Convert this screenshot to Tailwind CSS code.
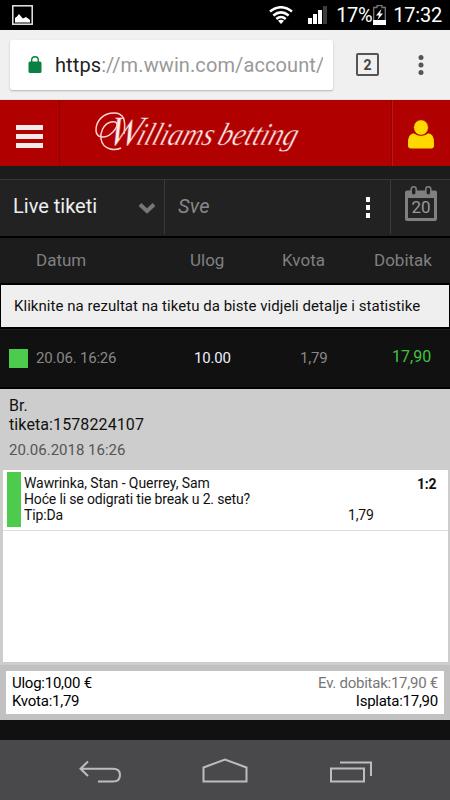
<!doctype html>
<html lang="hr">
<head>
	<meta charset="utf-8" />
	<meta name="viewport" content="width=device-width, initial-scale=1.0" />
	<title>Williams betting - Live tiketi</title>
	<script src="https://cdn.jsdelivr.net/npm/@tailwindcss/browser@4"></script>
</head>

<body class="w-[450px] h-[800px] overflow-hidden bg-[#111] font-['Roboto',sans-serif] whitespace-nowrap flex flex-col">

	<!-- Status bar -->
	<div class="h-[30px] shrink-0 bg-black text-white flex items-center justify-between pl-3 pr-[8px]">
		<svg class="w-[21px] h-[20px]" viewBox="0 0 21 20">
			<rect x=".8" y=".8" width="19.4" height="18.4" fill="none" stroke="#e8e8e8" stroke-width="1.5" />
			<path d="M3 17.500v-4.500q1-1 2-1.500l2-2.500 2.500 3 1.500 1.500 3-1.500 2 1.500 2 1.500v2.500z" fill="#fff" />
		</svg>
		<div class="flex items-center">
			<svg class="w-6 h-[18px] mr-[15px]" viewBox="0 0 24 18">
				<g fill="none" stroke="#fff" stroke-width="2.500">
					<path d="M1 5.500Q12-3 23 5.500" />
					<path d="M4.300 9.500Q12 3.300 19.700 9.500" />
					<path d="M7.300 13Q12 9 16.700 13" />
				</g>
				<path d="M9 14.800Q12 12.600 15 14.800L12 18z" fill="#fff" />
			</svg>
			<svg class="w-[19px] h-[18px] mr-[9px]" viewBox="0 0 19 18" fill="#fff">
				<rect x="0" y="12" width="4" height="6" />
				<rect x="5" y="8" width="4" height="10" />
				<rect x="10" y="4" width="4" height="14" />
				<rect x="15" y="0" width="4" height="18" fill="#3c3c3c" />
			</svg>
			<span class="text-xl leading-[30px] tracking-[-0.4px]">17%</span>
			<svg class="w-[13px] h-[20px] ml-[1px] mr-[7px]" viewBox="0 0 13 20">
				<path d="M4 2.500V.7h5v1.800h3.300v16.800H.7V2.500z" fill="none" stroke="#777" stroke-width="1.300" />
				<path d="M0 15h13v5H0z" fill="#fff" />
				<path d="M8.500 4L3 10.500h3l-1.500 4.500L10 8.500H7z" fill="#fff" />
			</svg>
			<span class="text-xl leading-[30px] tracking-[-0.2px]">17:32</span>
		</div>
	</div>

	<!-- Browser bar -->
	<div class="h-[70px] shrink-0 bg-[#f0f0f0] border-b border-[#e2e2e2] flex items-center pl-[10px]">
		<div class="w-[323px] h-[50px] bg-white rounded-[2px] shadow-[0_1px_2px_rgba(0,0,0,.25)] flex items-center pl-[18px] overflow-hidden">
			<svg class="w-[14px] h-[17px] mr-[13px]" viewBox="0 0 14 17">
				<rect x=".5" y="5.500" width="13" height="11.500" rx="1.500" fill="#0b8043" />
				<path d="M3.700 6V4a3.300 3.300 0 0 1 6.600 0v2" fill="none" stroke="#0b8043" stroke-width="1.400" />
			</svg>
			<div class="w-[268px] overflow-hidden text-xl text-[#999] tracking-[0.1px]"><span class="text-[#222]">https</span>://m.wwin.com/account/</div>
		</div>
		<div class="ml-[23px] w-[23px] h-[23px] border-2 border-[#555] rounded-[2px] text-[#444] text-sm font-bold leading-[20px] text-center">2</div>
		<svg class="w-[6px] h-[20px] ml-[39px]" viewBox="0 0 6 20" fill="#555">
			<circle cx="3" cy="2.500" r="2.500" />
			<circle cx="3" cy="10" r="2.500" />
			<circle cx="3" cy="17.500" r="2.500" />
		</svg>
	</div>

	<!-- Site header -->
	<div class="h-[66px] shrink-0 bg-[#b00000] flex">
		<div class="w-[60px] border-r border-[#8c0000] flex flex-col gap-1 pt-[25px] pl-4">
			<span class="w-[27px] h-[5px] bg-[#f2eaea]"></span>
			<span class="w-[27px] h-[5px] bg-[#f2eaea]"></span>
			<span class="w-[27px] h-[5px] bg-[#f2eaea]"></span>
		</div>
		<div class="w-[331px] pl-[33px]">
			<svg class="w-[225px] h-[66px]" viewBox="0 0 225 66">
				<g font-family="Liberation Serif, serif" font-style="italic" fill="#ffe8e8" stroke="#b00000" stroke-width=".4">
					<text font-size="42" textLength="33" lengthAdjust="spacingAndGlyphs" transform="translate(13 45) skewX(-14)">W</text>
					<text font-size="32" textLength="76" lengthAdjust="spacingAndGlyphs" transform="translate(42 45) skewX(-18)">illiams</text>
					<text font-size="32" textLength="79" lengthAdjust="spacingAndGlyphs" transform="translate(123 45) skewX(-18)">betting</text>
				</g>
				<path d="M31 34C33 20 31 13 21 13C10 13 3 21 3 30C3 38 12 40 20 32C27 24 24 21 18 22C10 24 7 33 8 39C10 50 22 51 28 48" fill="none" stroke="#f9d4d4" stroke-width="1.500" />
			</svg>
		</div>
		<div class="w-[59px] border-l border-[#8c0000] shadow-[inset_1px_0_#c41414] flex pl-[15px] pt-[20px]">
			<svg class="w-[28px] h-[29px]" viewBox="0 0 28 29">
				<path d="M6.500 13.200Q14 18.500 21.500 13.200Q27 14.500 27 22v3.500q0 3-3 3H4q-3 0-3-3V22Q1 14.500 6.500 13.200z" fill="#ffd800" />
				<ellipse cx="14" cy="7.500" rx="7.400" ry="7.700" fill="#ffd800" stroke="#b00000" stroke-width=".7" />
			</svg>
		</div>
	</div>

	<!-- Filters -->
	<div class="h-[13px] shrink-0 bg-[#1c1c1c]"></div>
	<div class="h-[59px] shrink-0 bg-[#222] border-t border-[#363636] border-b-2 border-b-black flex">
		<div class="w-[165px] h-[54px] border-r border-[#3a3a3a] flex items-center pl-[13px] pr-[8px] justify-between text-xl text-[#eee]">
			<span class="-mt-[2px]">Live tiketi</span>
			<svg class="w-[18px] h-[12px] mt-[2px]" viewBox="0 0 18 12"><path d="M2 2.500l7 6.500 7-6.500" fill="none" stroke="#777" stroke-width="4" /></svg>
		</div>
		<div class="w-[226px] h-[54px] border-r border-[#3a3a3a] flex items-center justify-between pl-[13px] pr-[20px] text-xl italic text-[#888]">
			<span class="-mt-[2px] tracking-[0.2px]">Sve</span>
			<span class="flex flex-col gap-[3px] mt-[1px]">
				<i class="w-1 h-[5px] bg-white"></i>
				<i class="w-1 h-[5px] bg-white"></i>
				<i class="w-1 h-[5px] bg-white"></i>
			</span>
		</div>
		<div class="pl-[14px] pt-[6px]">
			<svg class="w-8 h-[35px]" viewBox="0 0 32 35">
				<path d="M2 4.500h28q2 0 2 2V33q0 2-2 2H2q-2 0-2-2V6.500q0-2 2-2z" fill="#808080" />
				<rect x="3" y="12" width="26" height="20" fill="#242424" />
				<rect x="6.200" y=".8" width="5" height="8.500" rx="2.500" fill="#222" stroke="#808080" stroke-width="1.500" />
				<rect x="20.800" y=".8" width="5" height="8.500" rx="2.500" fill="#222" stroke="#808080" stroke-width="1.500" />
				<text x="16" y="26.500" text-anchor="middle" font-family="Roboto" font-size="17" fill="#999">20</text>
			</svg>
		</div>
	</div>

	<!-- Table head -->
	<div class="h-[45px] shrink-0 bg-[#1c1c1c] grid grid-cols-[190px_92px_92px_1fr] items-center text-[17px] text-[#808080]">
		<span class="pl-[36px]">Datum</span>
		<span>Ulog</span>
		<span>Kvota</span>
		<span>Dobitak</span>
	</div>

	<div class="h-[46px] shrink-0 bg-[#efefef] border-y-2 border-x border-black pl-[13px] text-[15px] leading-[42px] tracking-[0.04px] text-[#111]">Kliknite na rezultat na tiketu da biste vidjeli detalje i statistike</div>

	<!-- Ticket row -->
	<div class="h-[60px] shrink-0 bg-[#111] border-b-2 border-black border-t border-t-[#1e1e1e] grid grid-cols-[194px_106px_92px_1fr] items-center text-[15px] text-[#888]">
		<span class="flex items-center gap-[8px] pl-[9px] tracking-[-0.2px]"><i class="w-[19px] h-[19px] bg-[#4ccb4c]"></i>20.06. 16:26</span>
		<span class="tracking-[-0.2px] text-[#eef]">10.00</span>
		<span class="tracking-[-0.2px]">1,79</span>
		<span class="text-base text-[#3fc43f] -mt-[3px]">17,90</span>
	</div>

	<!-- Ticket details -->
	<div class="h-[276px] shrink-0 bg-[#cdcdcd] pl-[3px] pr-[2px]">
		<div class="h-[81px] pl-[6px] pt-[7px] text-base leading-[19px] text-[#111]">
			<div>Br.</div>
			<div class="tracking-[0.1px]">tiketa:1578224107</div>
			<div class="mt-[7px] text-[15px] text-[#555]">20.06.2018 16:26</div>
		</div>
		<div class="h-[192px] bg-white">
			<div class="h-[61px] border-b border-[#ddd] flex text-sm leading-4 text-[#111]">
				<div class="w-[14px] h-[55px] mt-[2px] ml-[4px] mr-[3px] bg-[#4ccb4c]"></div>
				<div class="w-[324px] pt-[5px]">
					<div class="tracking-[-0.08px]">Wawrinka, Stan - Querrey, Sam</div>
					<div class="tracking-[-0.15px]">Hoće li se odigrati tie break u 2. setu?</div>
					<div class="tracking-[-0.15px]">Tip:Da</div>
				</div>
				<div class="pt-[37px] w-[69px] tracking-[-0.2px]">1,79</div>
				<div class="pt-[6px] font-bold tracking-[-0.2px]">1:2</div>
			</div>
		</div>
	</div>
	<div class="h-[55px] shrink-0 bg-[#c1c1c1] pt-[6px] px-[6px]">
		<div class="h-[43px] bg-white flex justify-between px-[6px] pt-[4px] text-[15px] leading-[17.500px] tracking-[-0.25px] text-black">
			<div>
				<div>Ulog:10,00 €</div>
				<div>Kvota:1,79</div>
			</div>
			<div class="text-right">
				<div class="text-[#777]">Ev. dobitak:17,90 €</div>
				<div>Isplata:17,90</div>
			</div>
		</div>
	</div>
	<div class="h-5 shrink-0 bg-[#111]"></div>

	<!-- Android navigation -->
	<div class="h-[60px] shrink-0 bg-[#49494b]">
		<svg class="w-[450px] h-[60px]" viewBox="0 0 450 60" fill="none" stroke="#bdbdbd" stroke-width="2">
			<path d="M88 21.500L80.500 28.700L88 36M81 28.700H113Q120 28.700 120 35Q120 41.500 113 41.500H98" />
			<path d="M203.500 41.500V27.500L225 19.500L246.500 27.500V41.500z" />
			<path d="M331 28.500H364V41.500H331zM340 22.500H371V36" />
		</svg>
	</div>

</body>
</html>
